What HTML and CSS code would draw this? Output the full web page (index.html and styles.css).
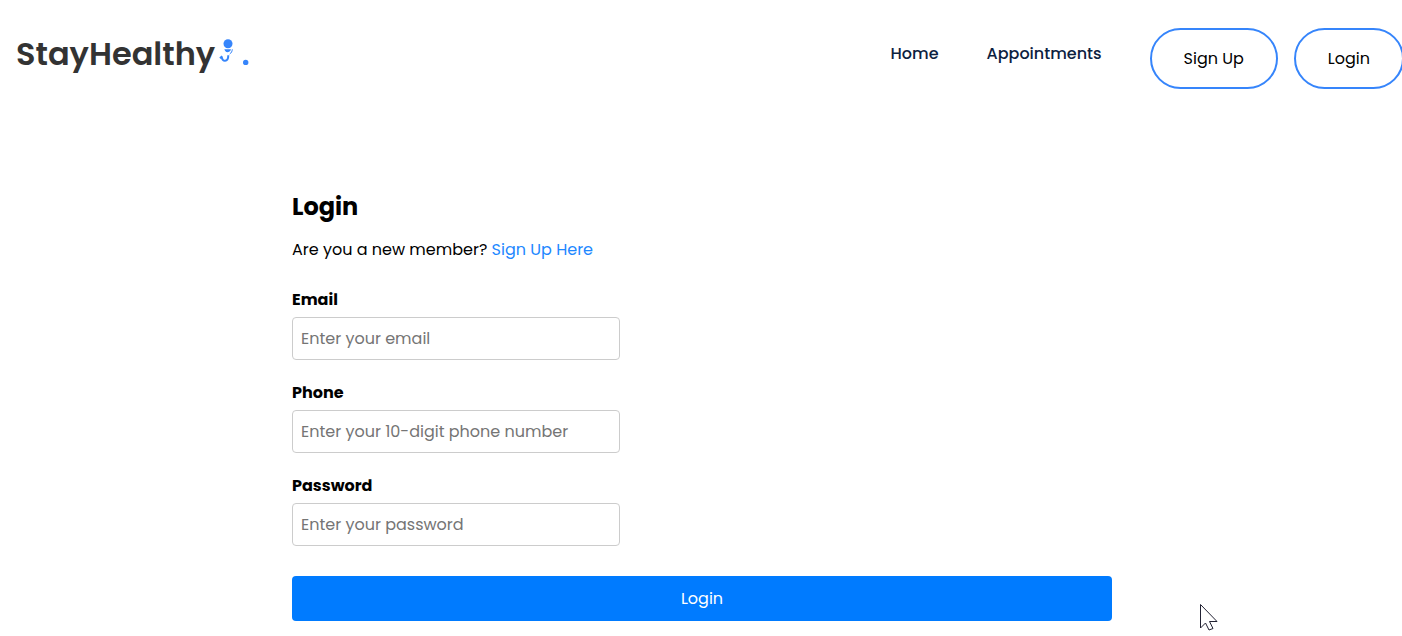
FILE: index.html
```html
<!DOCTYPE html>
<html lang="en">
<head>
<meta charset="utf-8">
<meta name="viewport" content="width=device-width, initial-scale=1">
<title>StayHealthy - Login</title>
<link rel="stylesheet" href="styles.css">
</head>
<body>
<header class="navbar">
  <a class="brand" href="#"><span>StayHealthy</span><svg class="brand-mark" width="34" height="40" viewBox="0 0 34 40" aria-hidden="true">
      <circle cx="13" cy="9.700" r="4.500"/>
      <path d="M9.300 15.200h6.700l-.6 1.600c-1.400 1.800-4 1.800-5.200.2z"/>
      <path class="line" d="M17.300 15.300c-.1 2-.9 3.500-2.600 4.800"/>
      <path class="hook" d="M6.800 22.500c0 5.800 6.500 6.200 6.500-1.300M5 24.300l2.200-2"/>
      <circle cx="30.700" cy="28.400" r="2.700"/>
    </svg></a>
  <nav class="menu">
    <a class="menu-link" href="#">Home</a>
    <a class="menu-link" href="#">Appointments</a>
    <div class="menu-actions">
      <button class="pill" type="button">Sign Up</button>
      <button class="pill" type="button">Login</button>
    </div>
  </nav>
</header>
<main class="page">
  <form class="login">
    <h1 class="title">Login</h1>
    <p class="intro">Are you a new member? <a class="intro-link" href="#">Sign Up Here</a></p>
    <div class="field">
      <label for="email">Email</label>
      <input id="email" type="email" placeholder="Enter your email">
    </div>
    <div class="field">
      <label for="phone">Phone</label>
      <input id="phone" type="tel" placeholder="Enter your 10-digit phone number">
    </div>
    <div class="field">
      <label for="password">Password</label>
      <input id="password" type="password" placeholder="Enter your password">
    </div>
    <button class="submit" type="submit">Login</button>
  </form>
</main>
<svg class="pointer" width="20" height="28" viewBox="0 0 20 28" aria-hidden="true">
  <path d="M1.500 1.500v23.500l5-5 3.500 7 4-1.500-3.500-7h7.500z"/>
</svg>
</body>
</html>
```
FILE: styles.css
```css
* {
  box-sizing: border-box;
}

body {
  margin: 0;
  background: #fff;
  color: #000;
  font-family: Poppins, Inter, sans-serif;
  font-size: 16px;
  line-height: 24px;
}

a {
  text-decoration: none;
}

button,
input {
  font: inherit;
}

.navbar {
  display: flex;
  justify-content: space-between;
  align-items: flex-start;
  padding: 28px 0 0 16px;
  overflow: hidden;
}

.brand {
  display: flex;
  align-items: center;
  padding-top: 6px;
  color: #333;
  font-size: 32px;
  font-weight: 600;
  line-height: 40px;
}

.brand-mark {
  fill: #3685fb;
}

.brand-mark .line,
.brand-mark .hook {
  fill: none;
  stroke: #3685fb;
}

.brand-mark .hook {
  stroke-width: 2;
}

.menu {
  display: flex;
  align-items: flex-start;
  gap: 48px;
  margin-right: -2px;
}

.menu-link {
  padding-top: 14px;
  color: #0c213f;
  font-weight: 500;
}

.menu-actions {
  display: flex;
  gap: 16px;
}

.pill {
  padding: 16px 32px;
  border: 2px solid #3685fb;
  border-radius: 32px;
  background: #fff;
  color: #000;
  line-height: 25px;
}

.page {
  padding: 100px 0 15px 2px;
}

.login {
  max-width: 820px;
  margin: 0 auto;
}

.title {
  margin: 0;
  font-size: 24px;
  font-weight: 700;
  line-height: 36px;
}

.intro {
  margin: 13px 0 26px;
}

.intro-link {
  color: #1e88ff;
}

.field {
  display: flex;
  flex-direction: column;
  gap: 5px;
  margin-bottom: 21px;
}

.field label {
  font-weight: 700;
}

.field input {
  width: 40%;
  height: 43px;
  padding: 8px;
  border: 1px solid #ccc;
  border-radius: 4px;
}

.field input::placeholder {
  color: #757575;
}

.submit {
  width: 100%;
  margin-top: 9px;
  padding: 10px;
  border: 0;
  border-radius: 4px;
  background: #007bff;
  color: #fff;
  line-height: 25px;
}

.pointer {
  position: absolute;
  left: 1199px;
  top: 603px;
  fill: #fff;
  stroke: #223;
}
```
